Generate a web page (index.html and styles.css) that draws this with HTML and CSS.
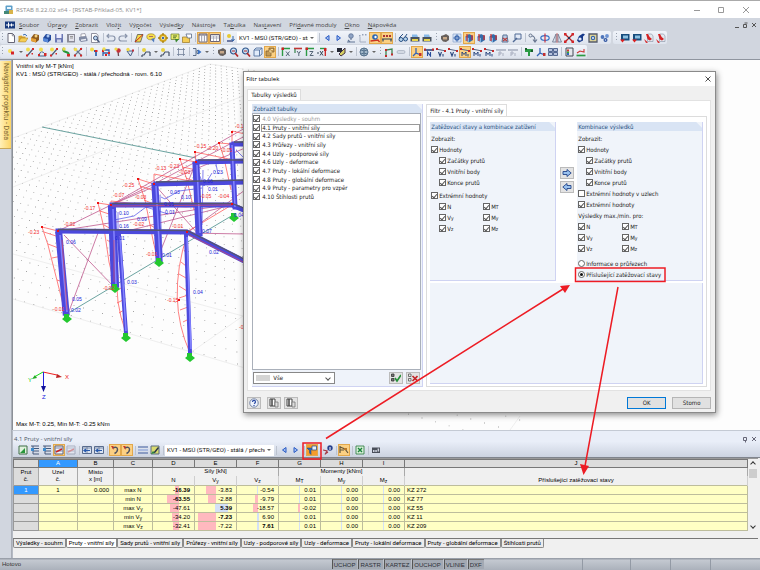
FILE: index.html
```html
<!DOCTYPE html>
<html lang="cs">
<head>
<meta charset="utf-8">
<title>RSTAB 8.22.02 x64</title>
<link rel="stylesheet" href="styles.css">
</head>
<body>
<svg class="defs" aria-hidden="true">
  <symbol id="logo" viewBox="0 0 10 10"><rect x="1.500" y=".5" width="7" height="7" rx="1" fill="#5d9fc9"/><rect x="3" y="2" width="4" height="2" fill="#e9f5fc"/><path d="M0 6h5v3H0z" fill="#487"/><path d="M5 5h4v4H5z" fill="#d9b44a"/></symbol>
  <symbol id="appmark" viewBox="0 0 10 10"><path d="M0 1.500h10v7H0z" fill="#16387c"/><path d="M1 5h8M3.500 2.500v5M6.500 3.500v3" stroke="#fff"/></symbol>
  <symbol id="new" viewBox="0 0 10 10"><path d="M2 .5h4.500L8.500 2.500v7H2z" fill="#fff" stroke="#667"/><path d="M6.300.5v2.300h2.200" fill="none" stroke="#667" stroke-width=".7"/></symbol>
  <symbol id="open" viewBox="0 0 10 10"><path d="M.5 8.500V3l3-.5 1 1h3v5z" fill="#d8a530"/><path d="M.5 8.800 3 5h7L7.500 9z" fill="#f6ce55" stroke="#a67b1c" stroke-width=".5"/><path d="M5 2q2-2 4 1" fill="none" stroke="#3b6fb4"/></symbol>
  <symbol id="boxo" viewBox="0 0 10 10"><path d="M1 5 4 1l5 1v5L6 9.500 1 8z" fill="#8d5a1e"/><path d="m1 5 5 1v3.500L1 8z" fill="#e6a137"/><circle cx="6" cy="3" r="1.500" fill="#f7d27c"/></symbol>
  <symbol id="boxb" viewBox="0 0 10 10"><path d="M1 5 4 1l5 1v5L6 9.500 1 8z" fill="#234a9c"/><path d="m1 5 5 1v3.500L1 8z" fill="#5787d8"/><circle cx="6" cy="3" r="1.500" fill="#a9c6f2"/></symbol>
  <symbol id="save" viewBox="0 0 10 10"><path d="M1 1h8v8.500H1z" fill="#6b78b4"/><path d="M2.500 1h5v4h-5z" fill="#eef"/><path d="M3 6.500h4v3H3z" fill="#ccd3ea"/></symbol>
  <symbol id="saveall" viewBox="0 0 10 10"><path d="M1 1h8v8.500H1z" fill="#8b8c98"/><path d="M3 2h5v6H3z" fill="#e2e3ec"/><path d="M4 3.500h3M4 5h3" stroke="#999"/></symbol>
  <symbol id="print" viewBox="0 0 10 10"><path d="M3 1l4-.5L8 4H3z" fill="#fff" stroke="#778" stroke-width=".6"/><path d="M1 4l7-1 1.500 3v2L3 9 1 7z" fill="#828ca5"/><path d="M3 6.500l5-.7v1.500l-5 .7z" fill="#e9ecf5"/></symbol>
  <symbol id="preview" viewBox="0 0 10 10"><path d="M1.500.5h5l1.500 2v7H1.500z" fill="#fff" stroke="#778" stroke-width=".8"/><circle cx="5.500" cy="5" r="2" fill="#bdd8f3" stroke="#457"/><path d="m7 6.500 2.500 3" stroke="#457" stroke-width="1.300"/></symbol>
  <symbol id="undo" viewBox="0 0 10 10"><path d="M1 3h5.500a2.500 2.500 0 0 1 0 5H1M3 1 1 3l2 2" fill="none" stroke="#8a95ab" stroke-width="1.200"/></symbol>
  <symbol id="redo" viewBox="0 0 10 10"><path d="M9 3H3.500a2.500 2.500 0 0 0 0 5H9M7 1l2 2-2 2" fill="none" stroke="#8a95ab" stroke-width="1.200"/></symbol>
  <symbol id="plane" viewBox="0 0 10 10"><path d="M1 9 3.500 1.500H9L6.500 9z" fill="#f5d94b" stroke="#444" stroke-width=".7"/><path d="M1 9 9 1.500" stroke="#c22" stroke-width="1"/></symbol>
  <symbol id="bubble" viewBox="0 0 10 10"><ellipse cx="5" cy="3.800" rx="4.200" ry="3" fill="#f7de4b" stroke="#977b20" stroke-width=".6"/><path d="M5 6l3 3.500L8.500 5z" fill="#4f79bb"/><path d="M3 3.500h4" stroke="#956" stroke-width=".8"/></symbol>
  <symbol id="gear" viewBox="0 0 10 10"><circle cx="5" cy="5" r="3" fill="#fff3a8" stroke="#d2a41e" stroke-width="2"/><path d="M5 0v2M5 8v2M0 5h2M8 5h2" stroke="#a37d12" stroke-width="1.300"/><circle cx="5" cy="5" r="1.200" fill="#3a66b5"/></symbol>
  <symbol id="note" viewBox="0 0 10 10"><path d="M1 1h8v5.500H1z" fill="#e9ee6c" stroke="#667a2c" stroke-width=".7"/><path d="M3 3h4M3 4.800h3" stroke="#55702c"/><path d="m5 6 1 3.500L9 6z" fill="#39862f"/></symbol>
  <symbol id="folderpen" viewBox="0 0 10 10"><path d="M.5 4h7v5.500h-7z" fill="#f4cd57" stroke="#9b7721" stroke-width=".7"/><path d="M4 1h5.500v4H5.500z" fill="#fff" stroke="#596b89" stroke-width=".8"/></symbol>
  <symbol id="cols" viewBox="0 0 10 10"><path d="M1 1h8v8H1z" fill="#fff" stroke="#6c6474"/><path d="M1 2h8" stroke="#6c6474"/><path d="M3.700 1v8M6.400 1v8" stroke="#99a"/></symbol>
  <symbol id="tablei" viewBox="0 0 10 10"><path d="M.5 1.500h9v7h-9z" fill="#fff" stroke="#6c6474"/><path d="M1 3h8M1 5h8M3.500 3v5M6.500 3v5" stroke="#99a" stroke-width=".7"/></symbol>
  <symbol id="load" viewBox="0 0 10 10"><circle cx="3" cy="3" r="2" fill="#e7c933"/><path d="M1 8h6" stroke="#458" stroke-width="1.500"/><path d="M7 3v5M5.500 6 7 8l1.500-2" fill="none" stroke="#36a"/></symbol>
  <symbol id="lt" viewBox="0 0 10 10"><path d="M7 2.500 3.500 5 7 7.500z" fill="#a9c4f3" stroke="#285ac5" stroke-width="1"/></symbol>
  <symbol id="gt" viewBox="0 0 10 10"><path d="M3 2.500 6.500 5 3 7.500z" fill="#a9c4f3" stroke="#285ac5" stroke-width="1"/></symbol>
  <symbol id="diag" viewBox="0 0 10 10"><circle cx="5" cy="3" r="2.300" fill="#8fa3c4" stroke="#51688e" stroke-width=".7"/><path d="M5 5v2M1 9h8M2 7l2 2" stroke="#637695" stroke-width="1.100"/></symbol>
  <symbol id="xxx" viewBox="0 0 10 10"><path d="M1 2h1.500v1.500H1zM4 1h1.500v1.500H4zM7 1h1.500v1.500H7z" fill="#98a3b7"/><path d="M2 4v5h6" fill="none" stroke="#a5aec0"/></symbol>
  <symbol id="eye" viewBox="0 0 10 10"><path d="M.5 8 8 7l1.500 2" fill="none" stroke="#c32" stroke-width="1.300"/><circle cx="5" cy="4" r="2.800" fill="#2c68b5"/><circle cx="5.500" cy="4" r="1.200" fill="#fff"/></symbol>
  <symbol id="vals" viewBox="0 0 10 10"><path d="M1 2h2v2H1zM4 2h2v2H4zM7 2h2v2H7z" fill="#a33"/><path d="M0 6h10M1 6v2.500M9 6v2.500" stroke="#345" stroke-width="1.200"/></symbol>
  <symbol id="glasses" viewBox="0 0 10 10"><circle cx="3" cy="6.500" r="2" fill="#b6d4ec" stroke="#2b5285"/><circle cx="7.500" cy="6" r="2" fill="#b6d4ec" stroke="#2b5285"/><path d="M1 5 5 1M7 4l2-3" stroke="#2b5285"/></symbol>
  <symbol id="printer" viewBox="0 0 10 10"><path d="M.5 4h9v4.500h-9z" fill="#49525f"/><path d="M2 1.500h5L8 4H2z" fill="#87b9e8"/><path d="M2 6h6v2H2z" fill="#e8d54b"/></symbol>
  <symbol id="hand" viewBox="0 0 10 10"><path d="M1 3 4 2l2-1 3 2v4L6 9 3 8.500 1 6z" fill="#67605c"/><path d="M3 4h4v2.500H3z" fill="#c7a889"/></symbol>
  <symbol id="fine" viewBox="0 0 10 10"><path d="M1 1h8v8H1z" fill="#dbe6f6" stroke="#8ba5cd" stroke-width=".7"/><circle cx="5" cy="5" r="2" fill="none" stroke="#3f6bb0" stroke-width="1.300"/><path d="M5 1v8M1 5h8" stroke="#3f6bb0" stroke-width=".7"/></symbol>
  <symbol id="cube" viewBox="0 0 10 10"><path d="M1 4 5 1l4 2v4L5 9.500 1 7z" fill="#356ba9"/><path d="m1 4 4 1v4.500L1 7z" fill="#83b5e2"/><path d="M3 1v7M8 2v5" stroke="#c33" stroke-width="1.300"/></symbol>
  <symbol id="mesh" viewBox="0 0 10 10"><path d="m2 9 1-7h4l1 7z" fill="#b8cbe5" stroke="#5d7497"/><path d="m3 5 4 3M7 5 3 8" stroke="#b74141" stroke-width="1.200"/></symbol>
  <symbol id="search" viewBox="0 0 10 10"><path d="M3 1h6v5H3z" fill="#e3eaf7" stroke="#506a95"/><path d="M1 9l4-4" stroke="#506a95" stroke-width="1.500"/></symbol>
  <symbol id="curve" viewBox="0 0 10 10"><circle cx="2.500" cy="2.500" r="1.500" fill="none" stroke="#66758e"/><path d="M4 3q3 0 3 5M5 6.500 7 9l2-2.500" fill="none" stroke="#66758e" stroke-width="1.100"/></symbol>
  <symbol id="rot" viewBox="0 0 10 10"><ellipse cx="5" cy="5" rx="4.200" ry="2.400" fill="none" stroke="#3671c6" stroke-width="1.200"/><path d="M5 .5v9" stroke="#c34" stroke-width="1.200"/></symbol>
  <symbol id="mirror" viewBox="0 0 10 10"><path d="M4 1v8H.5zM6 1v8h3.500z" fill="#dde3ee" stroke="#69758b" stroke-width=".8"/><path d="M5 0v10" stroke="#b33" stroke-width=".7"/></symbol>
  <symbol id="cross" viewBox="0 0 10 10"><path d="M1 1 9 9M9 1 1 9" stroke="#b32023" stroke-width="1.300"/><path d="M0 0h2.500v2.500H0zM7.500 0H10v2.500H7.500zM0 7.500h2.500V10H0zM7.500 7.500H10V10H7.500z" fill="#d3262a"/><path d="M4 4h2v2H4z" fill="#235"/></symbol>
  <symbol id="ring" viewBox="0 0 10 10"><path d="M3 3 7 .5l2 1-2 2v4l-4 2-2-2z" fill="#173a8a"/><circle cx="4" cy="6" r="1.600" fill="#e4ebfb"/></symbol>
  <symbol id="camera" viewBox="0 0 10 10"><path d="M1 1h8v8H1z" fill="#dfd497" stroke="#555b6c" stroke-width="1.300"/><circle cx="5" cy="5" r="2.200" fill="#3466aa"/><circle cx="5" cy="5" r=".9" fill="#fff"/></symbol>
  <symbol id="balls" viewBox="0 0 10 10"><circle cx="2.500" cy="4" r="1.900" fill="#4d74ba"/><circle cx="7" cy="3" r="1.900" fill="#6c92d2"/><circle cx="5.500" cy="7" r="2" fill="#3559a1"/><circle cx="5.500" cy="7" r=".7" fill="#dce8fb"/></symbol>
  <symbol id="scr" viewBox="0 0 10 10"><path d="M1 1h8.500v6.500H1z" fill="#174c7d"/><path d="M3 2.500h5v3H3z" fill="#8dc1e2"/><path d="m0 6.500 2.500 3L5 6.500z" fill="#d22"/></symbol>
  <symbol id="pdf" viewBox="0 0 10 10"><path d="M3.500 1h4l1.500 2v5.500H3.500z" fill="#e3e8ef" stroke="#8791a3" stroke-width=".6"/><path d="M2 1h2q1 3 4 5l-2 1.500q-2-1-2.500-1.500zM0 6l4 3.500-2 .5z" fill="#d32224"/></symbol>
  <symbol id="node" viewBox="0 0 10 10"><circle cx="4" cy="4" r="2" fill="#f7e15d"/><path d="M5 4.500h3V7.500H5z" fill="#d52426"/></symbol>
  <symbol id="member" viewBox="0 0 10 10"><path d="M2 9 8 2" stroke="#4c5c76" stroke-width="1.200"/><path d="M1 7.500h2V9.500H1zM7 1h2v2H7zM6.500 6h1.500v1.500H6.500z" fill="#d22b2b"/><circle cx="3" cy="2.500" r="2" fill="#f0dc4e"/></symbol>
  <symbol id="arc" viewBox="0 0 10 10"><path d="M2 8q2-6 6-1M1 9h8" fill="none" stroke="#47618a"/><path d="M7 6h2.500v3H7zM1 7h2v2H1z" fill="#d22b2b"/><circle cx="4" cy="2.500" r="2" fill="#f0dc4e"/></symbol>
  <symbol id="greenm" viewBox="0 0 10 10"><path d="M3 1q-2 3 2 4t2 4" fill="none" stroke="#24963a" stroke-width="2.200"/><path d="M6 7h3v2.500H6z" fill="#d22b2b"/><circle cx="3" cy="2" r="1.700" fill="#e7d849"/></symbol>
  <symbol id="xmem" viewBox="0 0 10 10"><path d="m1 1 8 8M9 1 1 9" stroke="#66748a" stroke-width="1.100"/><path d="M1 7.500h2V9.500H1zM7 1h2v2H7zM7 7.500h2V9.500H7z" fill="#cc2a2a"/><circle cx="2.500" cy="2.500" r="1.800" fill="#f0dc4e"/></symbol>
  <symbol id="support" viewBox="0 0 10 10"><circle cx="3" cy="2.500" r="2" fill="#f0dc4e"/><path d="M5 4h2v5" fill="none" stroke="#3567ae" stroke-width="1.800"/><path d="M6 3h2.500v2H6z" fill="#d22"/></symbol>
  <symbol id="sets" viewBox="0 0 10 10"><path d="M2 9V3h6v6M2 6h6" fill="none" stroke="#3961a8" stroke-width="1.300"/><path d="M1 3h2v2H1zM7 5h2v2H7zM4 7h2v2H4z" fill="#d22"/><circle cx="3" cy="2" r="1.700" fill="#f0dc4e"/></symbol>
  <symbol id="pin" viewBox="0 0 10 10"><path d="m5 4 .5 5" stroke="#6b4650" stroke-width="1.300"/><circle cx="5.500" cy="3.500" r="2.200" fill="#c4313a"/><circle cx="3" cy="2" r="1.600" fill="#f1d949"/></symbol>
  <symbol id="pin2" viewBox="0 0 10 10"><path d="M2 4h6L5.500 9z" fill="#e3e9f4" stroke="#445b83"/><path d="M7 2.500h2v2H7z" fill="#c4313a"/><circle cx="3" cy="2.500" r="1.700" fill="#f1d949"/></symbol>
  <symbol id="dash" viewBox="0 0 10 10"><circle cx="3" cy="3" r="2" fill="#e7d144"/><path d="M1 8h2l2-3h4M9 5v4M1 8v2" fill="none" stroke="#435066" stroke-width="1.200"/></symbol>
  <symbol id="dims" viewBox="0 0 10 10"><path d="M2.500 1v8M7.500 1v8M1 2.500h8M1 7.500h8" stroke="#75839b" stroke-width=".8"/></symbol>
  <symbol id="flow" viewBox="0 0 10 10"><path d="M1 1.500h3v7H1M5 3.500h2v3H5z" fill="#dfe7f5" stroke="#4e627f" stroke-width=".9"/><path d="M6 2.500 9.500 5 6 7.500z" fill="#3972c6"/></symbol>
  <symbol id="zoom" viewBox="0 0 10 10"><circle cx="4.500" cy="4" r="3" fill="#cae1f6" stroke="#31588d" stroke-width="1.200"/><path d="m6 6 3 3.500" stroke="#b22828" stroke-width="1.700"/><path d="M3 4h3" stroke="#b22828"/></symbol>
  <symbol id="wire" viewBox="0 0 10 10"><path d="M1 3h5.500v6H1zM1 3l2-2h6L6.500 3M9 1v6L6.500 9" fill="#e1ecfa" stroke="#52729f" stroke-width=".9"/></symbol>
  <symbol id="solid" viewBox="0 0 10 10"><path d="M1 4h3V1h5v4H6v4H1z" fill="#c39a55" stroke="#80602f" stroke-width=".8"/><path d="M4 4h2v2M6 2.500h2" fill="none" stroke="#f5dda2"/></symbol>
  <symbol id="viewx" viewBox="0 0 10 10"><path d="M1.500 9V1.500H9" fill="none" stroke="#2d9a45" stroke-width="1.400"/><path d="M.5.5h2.500V3H.500z" fill="#c22"/><path d="m5 4.500 3.500 4.500m0-4.500L5 9" stroke="#567" stroke-width="1"/></symbol>
  <symbol id="viewy" viewBox="0 0 10 10"><path d="M1 1.500h8" stroke="#c13535" stroke-width="1.600"/><path d="M2 2v4" stroke="#3f8955" stroke-width="1.300"/><path d="m4 4 1.800 2.500L7.500 4M5.800 6.500V9" fill="none" stroke="#567"/></symbol>
  <symbol id="viewz" viewBox="0 0 10 10"><path d="M1.500 9V1.500H9" fill="none" stroke="#2d9a45" stroke-width="1.400"/><path d="M.5.5h2.500V3H.500z" fill="#c22"/><path d="M4.500 4.500H8L5 8.500h3.500" fill="none" stroke="#567"/></symbol>
  <symbol id="viewnx" viewBox="0 0 10 10"><path d="M3 1.500h6" stroke="#2d9a45" stroke-width="1.400"/><path d="M7 1h2.500v3H7z" fill="#c22"/><path d="M8.300 3v6" stroke="#c22" stroke-width="1.300"/><path d="M0 6h2M3 4l3 4.500M6 4 3 8.500" stroke="#345"/></symbol>
  <symbol id="paint" viewBox="0 0 10 10"><path d="M1 1h5v4H1z" fill="#252936"/><path d="M3 7 9 1v5L5 9z" fill="#d5cf62" stroke="#434"/></symbol>
  <symbol id="globe" viewBox="0 0 10 10"><circle cx="5" cy="5" r="4" fill="#a2b8ca" stroke="#54718c"/><path d="M2 3q3 2 6 0M5 1v8M2 7q3-2 6 0" fill="none" stroke="#54718c"/></symbol>
  <symbol id="frame" viewBox="0 0 10 10"><path d="M2 9V3l6-1v5" fill="none" stroke="#3d8550" stroke-width="1.300"/><path d="M1 8h2v2H1zM7 6.500h2v2H7zM1 2h2v2H1z" fill="#c22b2b"/></symbol>
  <symbol id="pill" viewBox="0 0 10 10"><rect x="1" y="3.500" width="8" height="3" rx="1.500" fill="#d3d9e3" stroke="#99a2b4" stroke-width=".6"/></symbol>
  <symbol id="axis" viewBox="0 0 10 10"><path d="M4 1v5l5 2M4 6 1 9" fill="none" stroke="#3364b6" stroke-width="1.300"/><path d="M7 6h2.500v3H7z" fill="#c32f2f"/></symbol>
  <symbol id="force" viewBox="0 0 10 10"><path d="M0 3h10" stroke="#263d75" stroke-width="1.500"/><path d="M0 1.500h2v2H0zM8 1.500h2v2H8z" fill="#c22b2b"/><path d="M3.500 9V5L6.500 9V5" fill="none" stroke="#264b9c" stroke-width="1.100"/></symbol>
  <symbol id="moment" viewBox="0 0 10 10"><path d="m0 2 10 2" stroke="#596783"/><path d="M0 1h2v2H0zM8 3h2v2H8z" fill="#c22b2b"/><path d="m2.500 5 1.500 4 1.500-4M7 7v2.500" fill="none" stroke="#28467e" stroke-width="1.100"/></symbol>
  <symbol id="moment2" viewBox="0 0 10 10"><path d="m0 2 10 2" stroke="#596783"/><path d="M0 1h2v2H0zM8 3h2v2H8z" fill="#c22b2b"/><path d="M2 9V5l2 2.500L6 5v4M8 7v2.500" fill="none" stroke="#28467e"/></symbol>
  <symbol id="faded" viewBox="0 0 10 10"><path d="M0 3h10" stroke="#9ba3b4" stroke-width="1.300"/><path d="M3 9V5h2v2H3M7 6v3" fill="none" stroke="#a9afc0"/></symbol>
  <symbol id="plant" viewBox="0 0 10 10"><path d="M1 2h8v3H6v4H4V5H1z" fill="#2b9a44"/><path d="M1 1h2v2H1zM7 3h2v2H7z" fill="#175c2b"/></symbol>
  <symbol id="grid4" viewBox="0 0 10 10"><path d="M.5 1.500h4v3h-4zM5.500 1.500h4v3h-4zM.5 5.500h4v3h-4zM5.500 5.500h4v3h-4z" fill="#b7c3de" stroke="#364c7c" stroke-width=".8"/></symbol>
  <symbol id="panel" viewBox="0 0 10 10"><path d="M2 1h7v8H2z" fill="#e4e7ec" stroke="#454b56"/><path d="M3 2.500h2v2H3z" fill="#d33"/><path d="M3 4.500h2v1.500H3z" fill="#3a3"/><path d="M3 6h2v2H3z" fill="#36b"/></symbol>
  <symbol id="result" viewBox="0 0 10 10"><path d="M.5 8.500h9" stroke="#2b9a44" stroke-width="1.700"/><path d="M1 6 4 4l4 1V2" fill="none" stroke="#c33" stroke-width="1.100"/></symbol>
  <symbol id="sheetg" viewBox="0 0 10 10"><path d="M1 1h8v8H1z" fill="#dff0dc" stroke="#406e48"/><path d="m2 8 5-5v5z" fill="#27963b"/></symbol>
  <symbol id="sheetb" viewBox="0 0 10 10"><path d="M1 1h8M3 1v8h6M3 3.500h6M3 6h6" fill="none" stroke="#46597a"/><path d="M1 3h3v3H1z" fill="#3d8bcc"/></symbol>
  <symbol id="sheetr" viewBox="0 0 10 10"><path d="M1 1h8v8H1z" fill="#f4f5fa" stroke="#5c6480"/><path d="M1 3h8M1 6h8" stroke="#7b88a8"/><path d="m2 7 6-3" stroke="#c22" stroke-width="1.500"/></symbol>
  <symbol id="colarrow" viewBox="0 0 10 10"><path d="M.5 1.500h9v7h-9z" fill="#d9e3f2" stroke="#596c8e"/><path d="M.5 3h9M5 2v6" stroke="#596c8e" stroke-width=".7"/><path d="M2 5.500h6M4 4 2 5.500 4 7" fill="none" stroke="#2659ad" stroke-width="1.200"/></symbol>
  <symbol id="hook" viewBox="0 0 10 10"><path d="M2.500 3q5-2 5 1.500 0 2.500-3 4" fill="none" stroke="#4f5260" stroke-width="1.400"/><path d="M1 1h2.500v4z" fill="#c93528"/></symbol>
  <symbol id="stripes" viewBox="0 0 10 10"><path d="M0 2h10M0 8h10" stroke="#7186b7" stroke-width="1.500"/><path d="M0 5h10" stroke="#aabbe0" stroke-width="2"/></symbol>
  <symbol id="edit" viewBox="0 0 10 10"><path d="M1 1h8v8H1z" fill="#d9da70" stroke="#5a6c81"/><path d="m3 8 5-6 1 1-4 5z" fill="#27324a"/><path d="m1 9 2-3 2 2z" fill="#268442"/></symbol>
  <symbol id="filter" viewBox="0 0 10 10"><path d="M0 3h6L4 5.500v4L2.500 8V5.500z" fill="#2b69bc" stroke="#1b4177" stroke-width=".5"/><path d="M5 1h4.500v4H5z" fill="#e5effc" stroke="#33588b" stroke-width=".8"/></symbol>
  <symbol id="info" viewBox="0 0 10 10"><circle cx="7" cy="3" r="2.700" fill="#27408d"/><path d="M7 2v3" stroke="#fff"/><path d="m0 5 4 1-2 3.500M5 7l-3 2" fill="none" stroke="#a33b45" stroke-width="1.200"/></symbol>
  <symbol id="branch" viewBox="0 0 10 10"><path d="M1 1v7M1 2l5 2 3 4M1 5h4" fill="none" stroke="#62563c" stroke-width="1.200"/><path d="M5 3h3v2H5z" fill="#b97828"/></symbol>
  <symbol id="excel" viewBox="0 0 10 10"><path d="M1 1h8v8H1z" fill="#d9efd9" stroke="#267a3a" stroke-width=".8"/><path d="m3 3 4 4m0-4L3 7" stroke="#18833a" stroke-width="1.400"/></symbol>
  <symbol id="calc" viewBox="0 0 10 10"><path d="M1 2.500h8v5.500H1z" fill="#4a4f5a"/><path d="M2 5h1.500v2H2zM4.300 5h1.500v2H4.300zM6.600 3.500h1.500v3H6.600z" fill="#cfd4df"/></symbol>
  <symbol id="q" viewBox="0 0 10 10"><circle cx="5" cy="5" r="4.200" fill="#eef3fd" stroke="#5c6f94" stroke-width=".8"/><path d="M3.500 4q0-1.600 1.500-1.600T6.500 4Q6.500 5 5 5.600M5 7v1" fill="none" stroke="#2949a3" stroke-width="1.200"/></symbol>
  <symbol id="copy" viewBox="0 0 10 10"><path d="M1 1h5v7H1z" fill="#fff" stroke="#444"/><path d="M3 1v7" stroke="#444" stroke-width="1.500"/><path d="M6 4h3v5H6z" fill="#ddd" stroke="#777" stroke-width=".8"/></symbol>
  <symbol id="bigright" viewBox="0 0 10 10"><path d="M1 3.500h4V1.500L9.200 5 5 8.500v-2H1z" fill="#9ac2ef" stroke="#22458a" stroke-width=".9"/></symbol>
  <symbol id="bigleft" viewBox="0 0 10 10"><path d="M9 3.500H5V1.500L.8 5 5 8.500v-2h4z" fill="#9ac2ef" stroke="#22458a" stroke-width=".9"/></symbol>
  <symbol id="allon" viewBox="0 0 10 10"><path d="M.5 1h2.500v2.500H.500zM.5 5.500h2.500V8H.500z" fill="#777" stroke="#333" stroke-width=".8"/><path d="m4 5 2 3 4-6" fill="none" stroke="#249038" stroke-width="1.600"/></symbol>
  <symbol id="alloff" viewBox="0 0 10 10"><path d="M.5 1h2.500v2.500H.500zM.5 5.500h2.500V8H.500z" fill="#eee" stroke="#555" stroke-width=".8"/><path d="m4.500 3 5 5m0-5-5 5" stroke="#c2262a" stroke-width="1.600"/></symbol>
</svg>

<div class="app">
  <header class="titlebar">
    <svg class="ico"><use href="#logo"/></svg>
    <span class="caption">RSTAB 8.22.02 x64 - [RSTAB-Příklad-05, KV1*]</span>
    <svg class="winctl" viewBox="0 0 60 10"><path d="M2 5.500h6M26.500 2.500h5v5h-5zM51 2l6 6m0-6-6 6" fill="none" stroke="#999"/></svg>
  </header>

  <nav class="menubar">
    <svg class="ico"><use href="#appmark"/></svg>
    <a href="#"><u>S</u>oubor</a><a href="#">Úpr<u>a</u>vy</a><a href="#"><u>Z</u>obrazit</a><a href="#">Vlož<u>i</u>t</a><a href="#">Vý<u>p</u>očet</a><a href="#">Výsled<u>k</u>y</a><a href="#">Nástroje</a><a href="#">Ta<u>b</u>ulka</a><a href="#">Nas<u>t</u>avení</a><a href="#">Pří<u>d</u>avné moduly</a><a href="#"><u>O</u>kno</a><a href="#"><u>N</u>ápověda</a>
    <svg class="docctl" viewBox="0 0 24 8"><path d="M1 6.500h4M9.500 3.500h3v3h-3zM10.500 2h3M18 2l4 4m0-4-4 4" fill="none" stroke="#555"/></svg>
  </nav>

  <div class="toolrow">
    <div class="strip">
      <i class="grip first"></i>
      <button><svg><use href="#new"/></svg></button><button><svg><use href="#open"/></svg></button><button><svg><use href="#boxo"/></svg></button><button><svg><use href="#boxb"/></svg></button><button><svg><use href="#save"/></svg></button><button><svg><use href="#saveall"/></svg></button><button><svg><use href="#print"/></svg></button><button><svg><use href="#preview"/></svg></button>
      <i class="sep"></i>
      <button><svg><use href="#undo"/></svg></button><button><svg><use href="#redo"/></svg></button>
      <i class="sep"></i>
      <button><svg><use href="#plane"/></svg></button><button><svg><use href="#bubble"/></svg></button><button><svg><use href="#gear"/></svg></button><button><svg><use href="#note"/></svg></button><button><svg><use href="#folderpen"/></svg></button>
      <i class="sep"></i>
      <button class="on"><svg><use href="#cols"/></svg></button><button class="on"><svg><use href="#tablei"/></svg></button>
      <i class="sep"></i>
      <button><svg><use href="#load"/></svg></button>
      <div class="combo top"><select aria-label="Zatěžovací stav"><option>KV1 - MSÚ (STR/GEO) - stálá / přechodná</option></select></div>
      <i class="sep"></i>
      <button><svg><use href="#lt"/></svg></button><button><svg><use href="#gt"/></svg></button><button><svg><use href="#diag"/></svg></button><button><svg><use href="#xxx"/></svg></button><button class="on"><svg><use href="#eye"/></svg></button><button class="on"><svg><use href="#vals"/></svg></button>
      <i class="sep"></i>
      <button><svg><use href="#glasses"/></svg></button><button><svg><use href="#printer"/></svg></button><button><svg><use href="#printer"/></svg></button>
      <i class="grip"></i>
      <button><svg><use href="#hand"/></svg></button><button><svg><use href="#fine"/></svg></button><button class="on"><svg><use href="#cube"/></svg></button><button><svg><use href="#cube"/></svg></button><button><svg><use href="#cube"/></svg></button><button><svg><use href="#mesh"/></svg></button><button><svg><use href="#search"/></svg></button>
      <i class="sep"></i>
      <button><svg><use href="#curve"/></svg></button><button><svg><use href="#rot"/></svg></button><button><svg><use href="#mirror"/></svg></button><button><svg><use href="#cross"/></svg></button><button><svg><use href="#ring"/></svg></button><button><svg><use href="#camera"/></svg></button><button><svg><use href="#balls"/></svg></button>
    </div>
    <div class="strip">
      <i class="grip"></i>
      <button><svg><use href="#scr"/></svg></button><button><svg><use href="#scr"/></svg></button><button><svg><use href="#pdf"/></svg></button><button><svg><use href="#pdf"/></svg></button>
    </div>
  </div>

  <div class="toolrow">
    <div class="strip">
      <i class="grip first"></i>
      <button><svg><use href="#node"/></svg></button><i class="dd"></i>
      <button><svg><use href="#member"/></svg></button><button><svg><use href="#arc"/></svg></button><button><svg><use href="#member"/></svg></button><button><svg><use href="#greenm"/></svg></button><button><svg><use href="#xmem"/></svg></button>
      <i class="sep"></i>
      <button><svg><use href="#support"/></svg></button><button><svg><use href="#sets"/></svg></button><button><svg><use href="#pin"/></svg></button><button><svg><use href="#pin2"/></svg></button>
      <i class="sep"></i>
      <button><svg><use href="#dash"/></svg></button><i class="dd"></i><button><svg><use href="#dash"/></svg></button>
      <i class="sep"></i>
      <button><svg><use href="#dims"/></svg></button>
      <i class="sep"></i>
      <button><svg><use href="#flow"/></svg></button><i class="dd"></i>
      <i class="grip"></i>
      <button><svg><use href="#hand"/></svg></button><button><svg><use href="#zoom"/></svg></button><button><svg><use href="#zoom"/></svg></button><button><svg><use href="#wire"/></svg></button><button class="on"><svg><use href="#solid"/></svg></button>
      <i class="sep"></i>
      <button><svg><use href="#viewx"/></svg></button><button><svg><use href="#viewy"/></svg></button><button><svg><use href="#viewz"/></svg></button><button><svg><use href="#viewnx"/></svg></button><i class="dd"></i>
      <button><svg><use href="#paint"/></svg></button><i class="dd"></i>
      <i class="sep"></i>
      <button><svg><use href="#globe"/></svg></button><i class="dd"></i>
      <i class="grip"></i>
      <button><svg><use href="#frame"/></svg></button><button><svg><use href="#pill"/></svg></button>
      <i class="sep"></i>
      <button class="on"><svg><use href="#axis"/></svg></button><button><svg><use href="#force"/></svg></button><button><svg><use href="#moment"/></svg></button><button><svg><use href="#moment"/></svg></button><button class="on"><svg><use href="#moment2"/></svg></button><button><svg><use href="#moment2"/></svg></button><button><svg><use href="#moment2"/></svg></button><button><svg><use href="#faded"/></svg></button><button><svg><use href="#faded"/></svg></button>
      <i class="sep"></i>
      <button><svg><use href="#plant"/></svg></button><button><svg><use href="#axis"/></svg></button><button><svg><use href="#grid4"/></svg></button>
      <i class="sep"></i>
      <button><svg><use href="#panel"/></svg></button><button><svg><use href="#result"/></svg></button>
    </div>
  </div>

  <div class="work">
    <aside class="side"><button class="sidetab">Navigátor projektu - Data</button></aside>
    <div class="content">
      <main class="view">
        <svg class="scene" viewBox="13 60 747 371" preserveAspectRatio="xMinYMin slice">
          <path id="ground" fill="#8d8d8d"/>
          <path d="M13 138 210 64 243 69M13 187 150 132 243 96M13 299 245 368M190 353 243 316M13 254 243 316M510 430l10-14" fill="none" stroke="#e4e4e4" stroke-width=".6"/>
          <path d="M42 127 196 158M70 312 233 215" fill="none" stroke="#6ba3a0"/>
          <g fill="none" stroke="#b8437f" stroke-width=".7">
            <path d="M64 235 115 288M98 233 68 314M58 231 232 204M111 205 245 148M111 205 245 128M58 231 111 205 154 184 245 136M119 233 232 205M187 233 245 234M187 233 245 190M154 184 199 235M196 162 159 255"/>
          </g>
          <g fill="none" stroke="#ff4b4b" stroke-width=".7">
            <path d="M58 231 42 227 48 245 65 312M44 232l15 5M48 244l13 5M52 258l10-2M57 280l6 2M111 205 98 203 104 228 109 262 115 286M100 211l12 4M104 225l9 5M107 240l6 4M109 255l6 4M154 184 138 179 145 200 153 240 158 262M140 186l15 5M144 200l12 5M150 225l7 4M196 162 180 159 187 180 194 210M182 167l15 3M186 178l11 4M232 144 219 143 224 158 231 190M232 144 232 131 245 134M196 162 195 152 243 162M154 184 154 174 205 184M111 205V201L155 206M187 235Q166 300 190 353M184 250l2 3M181 262l5 4M179 274l7 4M179 286l8 5M179 298l9-3M180 310l8-3M183 322l6-3M118 275Q114 300 126 333M116 291l5-3M117 303l6-3M119 313l5-3M185 233 230 206M113 203 186 207 232 204"/>
          </g>
          <g fill="none" stroke="#4b4bea" stroke-width=".7">
            <path d="M60 235l3 30M114 220l20-4 12-9 22 7M161 197l4 2 14-8 23-3M198 172l6 14 8-13M236 150l8 8M118 212v50M160 195l2 60M203 170l-1 55M216 164l2 10M120 234l4 50"/>
          </g>
          <g fill="none" stroke="#4c49dc" stroke-linecap="square">
            <path d="M232 145 235 207" stroke-width="5"/><path d="M196 165 199 233" stroke-width="7"/><path d="M155 186 159 259" stroke-width="7"/><path d="M112 209 115 284" stroke-width="8"/><path d="M59 235 66 312" stroke-width="7"/>
            <path d="M119 235 126 333M186 236 190 352" stroke-width="4"/>
            <path d="M234 144H246M198 162 246 161M156 184 246 182M112 205H232L246 211" stroke-width="5"/><path d="M58 231 187 232 246 262" stroke-width="5"/>
          </g>
          <g fill="none" stroke="#8484ff"><path d="M232 145 235 207M197 165 200 233M156 186 160 259M113 209 116 284M60 235 67 312M120 236l6 95M187 237l4 112" stroke-width="1.500"/></g>
          <g fill="none" stroke="#55566f" stroke-width="1.300"><path d="M58 229.500 187 230.500 246 260M112 203.500H232L246 209M156 182 246 180M198 160H246M234 142H246"/></g>
          <path d="M62 240l5 70M114 240v42M189 235l56 28M112 206l120-1" stroke="#e0495e" stroke-width=".7"/>
          <g fill="#23c82f"><path id="sup" d="M62 319l5-4 5 4-5 4zM64 314h5v4h-5z"/><use href="#sup" x="59" y="19"/><use href="#sup" x="123" y="39"/><use href="#sup" x="48" y="-30"/><use href="#sup" x="92" y="-56"/><use href="#sup" x="167" y="-101"/></g>
          <g fill="#e11"><path d="M57 230h2v2h-2zM110 204h2v2h-2zM153 183h2v2h-2zM195 161h2v2h-2zM231 203h2v2h-2zM186 231h2v2h-2zM41 226h2v2h-2zM97 202h2v2h-2zM137 178h2v2h-2zM179 158h2v2h-2zM218 142h2v2h-2zM194 151h2v2h-2zM231 131h2v2h-2zM178 299h2v2h-2z"/></g>
          <g class="lab red">
            <text x="28" y="234">-0.23</text><text x="64" y="226">-0.02</text><text x="84" y="210">-0.17</text><text x="113" y="197">-0.07</text><text x="123" y="187">-0.25</text><text x="135" y="199">-0.03</text><text x="155" y="170">-0.13</text><text x="168" y="168">-0.23</text><text x="179" y="174">-0.03</text><text x="195" y="148">-0.15</text><text x="207" y="150">-0.20</text><text x="221" y="152">-0.05</text><text x="235" y="128">-0.16</text><text x="200" y="198">-0.05</text><text x="218" y="198">-0.04</text><text x="133" y="226">-0.02</text><text x="172" y="228">-0.01</text><text x="53" y="311">-0.01</text><text x="103" y="290">-0.02</text><text x="146" y="256">-0.01</text><text x="167" y="302">-0.15</text><text x="239" y="329">-0.05</text>
          </g>
          <g class="lab blue">
            <text x="119" y="215">0.10</text><text x="137" y="221">0.09</text><text x="119" y="228">0.16</text><text x="115" y="240">0.01</text><text x="66" y="244">0.06</text><text x="72" y="301">0.05</text><text x="71" y="312">0.02</text><text x="127" y="284">0.03</text><text x="193" y="294">0.04</text><text x="162" y="257">0.01</text><text x="165" y="214">0.01</text><text x="164" y="206">0.05</text><text x="202" y="233">0.07</text><text x="234" y="217">0.04</text><text x="208" y="191">0.01</text><text x="203" y="183">0.06</text><text x="181" y="199">0.10</text><text x="170" y="194">0.03</text><text x="213" y="174">0.23</text><text x="209" y="254">0.02</text>
          </g>
          <path d="M43 372 57 375" stroke="#e22"/><path d="m62 377-6 1 1-4z" fill="#b22"/><path d="M43 372 36 376" stroke="#1d1"/><path d="m32 379 3-4 2 3z" fill="#2a2"/><path d="M43.500 372v15" stroke="#22d"/><path d="M41 386h5l-2.500 6z" fill="#119"/>
          <g class="lab axes"><text x="65" y="379" fill="#e22">X</text><text x="28" y="382" fill="#1c1">Y</text><text x="42" y="399" fill="#22d">Z</text></g>
        </svg>
        <p class="viewnote">Vnitřní síly M-T [kNm]<br>KV1 : MSÚ (STR/GEO) - stálá / přechodná - rovn. 6.10</p>
        <p class="viewfoot">Max M-T: 0.25, Min M-T: -0.25 kNm</p>
      </main>

      <section class="tablepanel">
        <div class="paneltop">
          <div class="panelhead"><h2>4.1 Pruty - vnitřní síly</h2><svg viewBox="0 0 16 8"><path d="M1.500 2.500h3v3h-3zM3.500 5.500v2M10 2l4 4m0-4-4 4" fill="none" stroke="#667"/></svg></div>
          <div class="paneltools">
            <button><svg><use href="#sheetg"/></svg></button><button><svg><use href="#sheetb"/></svg></button><button><svg><use href="#sheetb"/></svg></button><button class="on"><svg><use href="#sheetr"/></svg></button><button class="dim"><svg><use href="#sheetr"/></svg></button>
            <i class="sep"></i>
            <button><svg><use href="#colarrow"/></svg></button><button><svg><use href="#colarrow"/></svg></button>
            <i class="sep"></i>
            <button class="on"><svg><use href="#hook"/></svg></button><button class="on"><svg><use href="#hook"/></svg></button>
            <i class="sep"></i>
            <button><svg><use href="#stripes"/></svg></button><button><svg><use href="#edit"/></svg></button>
            <i class="sep"></i>
            <div class="combo low"><select aria-label="Zatěžovací stav tabulky"><option>KV1 - MSÚ (STR/GEO) - stálá / přechodná</option></select></div>
            <i class="sep"></i>
            <button><svg><use href="#lt"/></svg></button><button><svg><use href="#gt"/></svg></button>
            <i class="sep"></i>
            <button class="on strong"><svg><use href="#filter"/></svg></button>
            <i class="sep"></i>
            <button><svg><use href="#info"/></svg></button>
            <i class="sep"></i>
            <button class="on"><svg><use href="#branch"/></svg></button>
            <i class="sep"></i>
            <button><svg><use href="#excel"/></svg></button>
            <i class="sep"></i>
            <button><svg><use href="#calc"/></svg></button>
          </div>
        </div>
        <div class="sheet">
          <table>
            <colgroup><col class="c0"><col class="ca"><col class="cb"><col class="cc"><col class="cn"><col class="cn"><col class="cn"><col class="cn"><col class="cn"><col class="cn"><col></colgroup>
            <thead>
              <tr class="letters"><th></th><th class="sel">A</th><th>B</th><th>C</th><th>D</th><th>E</th><th>F</th><th>G</th><th>H</th><th>I</th><th>J</th></tr>
              <tr><th rowspan="2" class="corner">Prut<br>č.</th><th rowspan="2">Uzel<br>č.</th><th rowspan="2">Místo<br>x [m]</th><th rowspan="2"></th><th colspan="3" class="grp">Síly [kN]</th><th colspan="3" class="grp">Momenty [kNm]</th><th class="grp"></th></tr>
              <tr><th>N</th><th>V<sub>y</sub></th><th>V<sub>z</sub></th><th>M<sub>T</sub></th><th>M<sub>y</sub></th><th>M<sub>z</sub></th><th class="jh">Příslušející zatěžovací stavy</th></tr>
            </thead>
            <tbody>
              <tr><th class="sel">1</th><td class="mid">1</td><td>0.000</td><td class="mid">max N</td><td class="neg n" style="--w:4px"><b>-16.39</b></td><td class="neg" style="--w:10px">-3.83</td><td class="pos" style="--w:1px">-0.54</td><td class="pos" style="--w:1px">0.01</td><td class="pos" style="--w:1px">0.00</td><td class="pos" style="--w:1px">0.00</td><td class="kz">KZ 272</td></tr>
              <tr><th></th><td></td><td></td><td class="mid">min N</td><td class="neg n" style="--w:12px"><b>-63.55</b></td><td class="neg" style="--w:8px">-2.88</td><td class="neg" style="--w:3px">-9.79</td><td class="pos" style="--w:1px">0.01</td><td class="pos" style="--w:1px">0.00</td><td class="pos" style="--w:1px">0.00</td><td class="kz">KZ 77</td></tr>
              <tr><th></th><td></td><td></td><td class="mid">max V<sub>y</sub></td><td class="neg n" style="--w:9px">-47.61</td><td class="pos" style="--w:13px"><b>5.39</b></td><td class="neg" style="--w:5px">-18.57</td><td class="neg" style="--w:2px">-0.02</td><td class="pos" style="--w:1px">0.00</td><td class="pos" style="--w:1px">0.00</td><td class="kz">KZ 55</td></tr>
              <tr><th></th><td></td><td></td><td class="mid">min V<sub>y</sub></td><td class="neg n" style="--w:7px">-34.20</td><td class="neg" style="--w:18px"><b>-7.23</b></td><td class="pos" style="--w:2px">6.90</td><td class="pos" style="--w:1px">0.01</td><td class="pos" style="--w:1px">0.00</td><td class="pos" style="--w:1px">0.00</td><td class="kz">KZ 11</td></tr>
              <tr><th></th><td></td><td></td><td class="mid">max V<sub>z</sub></td><td class="neg n" style="--w:6px">-32.41</td><td class="neg" style="--w:18px">-7.22</td><td class="pos" style="--w:2px"><b>7.61</b></td><td class="pos" style="--w:1px">0.01</td><td class="pos" style="--w:1px">0.00</td><td class="pos" style="--w:1px">0.00</td><td class="kz">KZ 209</td></tr>
            </tbody>
          </table>
          <div class="scroll"><span class="up"></span><i></i><span class="down"></span></div>
        </div>
        <div class="tabs"><button>Výsledky - souhrn</button><button class="cur">Pruty - vnitřní síly</button><button>Sady prutů - vnitřní síly</button><button>Průřezy - vnitřní síly</button><button>Uzly - podporové síly</button><button>Uzly - deformace</button><button>Pruty - lokální deformace</button><button>Pruty - globální deformace</button><button>Štíhlosti prutů</button></div>
      </section>
    </div>
  </div>

  <footer class="status">
    <span class="ready">Hotovo</span>
    <span class="flag">UCHOP</span><span class="flag">RASTR</span><span class="flag">KARTEZ</span><span class="flag">OUCHOP</span><span class="flag">VLINIE</span><span class="flag">DXF</span>
    <span class="cells"><i></i><i></i><i></i><i></i></span>
  </footer>

  <div class="dialog" role="dialog" aria-label="Filtr tabulek">
    <div class="dtitle"><span>Filtr tabulek</span><svg viewBox="0 0 8 8"><path d="m1.500 1.500 5 5m0-5-5 5" stroke="#222" stroke-width=".8"/></svg></div>
    <div class="dbody">
      <button class="dtab">Tabulky výsledků</button>
      <div class="page">
        <div class="leftcol">
          <h3>Zobrazit tabulky</h3>
          <div class="list">
            <label class="off"><input type="checkbox" checked><span>4.0 Výsledky - souhrn</span></label>
            <label class="focus"><input type="checkbox" checked><span>4.1 Pruty - vnitřní síly</span></label>
            <label><input type="checkbox" checked><span>4.2 Sady prutů - vnitřní síly</span></label>
            <label><input type="checkbox" checked><span>4.3 Průřezy - vnitřní síly</span></label>
            <label><input type="checkbox" checked><span>4.4 Uzly - podporové síly</span></label>
            <label><input type="checkbox" checked><span>4.6 Uzly - deformace</span></label>
            <label><input type="checkbox" checked><span>4.7 Pruty - lokální deformace</span></label>
            <label><input type="checkbox" checked><span>4.8 Pruty - globální deformace</span></label>
            <label><input type="checkbox" checked><span>4.9 Pruty - parametry pro vzpěr</span></label>
            <label><input type="checkbox" checked><span>4.10 Štíhlosti prutů</span></label>
          </div>
          <div class="pick">
            <div class="colorsel"><i></i><select aria-label="Skupina tabulek"><option>Vše</option></select></div>
            <button class="sq"><svg><use href="#allon"/></svg></button><button class="sq"><svg><use href="#alloff"/></svg></button>
          </div>
        </div>
        <div class="rightcol">
          <button class="dtab inner">Filtr - 4.1 Pruty - vnitřní síly</button>
          <div class="subpage">
            <div class="groups">
              <fieldset class="group">
                <h3>Zatěžovací stavy a kombinace zatížení</h3>
                <p>Zobrazit:</p>
                <label><input type="checkbox" checked>Hodnoty</label>
                <label class="in"><input type="checkbox" checked>Začátky prutů</label>
                <label class="in"><input type="checkbox" checked>Vnitřní body</label>
                <label class="in"><input type="checkbox" checked>Konce prutů</label>
                <label class="gap2"><input type="checkbox" checked>Extrémní hodnoty</label>
                <div class="two in"><label><input type="checkbox" checked>N</label><label><input type="checkbox" checked>M<sub>T</sub></label><label><input type="checkbox" checked>V<sub>y</sub></label><label><input type="checkbox" checked>M<sub>y</sub></label><label><input type="checkbox" checked>V<sub>z</sub></label><label><input type="checkbox" checked>M<sub>z</sub></label></div>
              </fieldset>
              <div class="movers"><button class="sq"><svg><use href="#bigright"/></svg></button><button class="sq"><svg><use href="#bigleft"/></svg></button></div>
              <fieldset class="group">
                <h3>Kombinace výsledků</h3>
                <p>Zobrazit:</p>
                <label><input type="checkbox" checked>Hodnoty</label>
                <label class="in"><input type="checkbox" checked>Začátky prutů</label>
                <label class="in"><input type="checkbox" checked>Vnitřní body</label>
                <label class="in"><input type="checkbox" checked>Konce prutů</label>
                <label><input type="checkbox">Extrémní hodnoty v uzlech</label>
                <label><input type="checkbox" checked>Extrémní hodnoty</label>
                <p>Výsledky max./min. pro:</p>
                <div class="two"><label><input type="checkbox" checked>N</label><label><input type="checkbox" checked>M<sub>T</sub></label><label><input type="checkbox" checked>V<sub>y</sub></label><label><input type="checkbox" checked>M<sub>y</sub></label><label><input type="checkbox" checked>V<sub>z</sub></label><label><input type="checkbox" checked>M<sub>z</sub></label></div>
                <label class="gap4"><input type="radio" name="info">Informace o průřezech</label>
                <label><input type="radio" name="info" checked>Příslušející zatěžovací stavy</label>
              </fieldset>
            </div>
            <div class="group blank"></div>
          </div>
        </div>
      </div>
      <div class="dfoot">
        <button class="sq"><svg><use href="#q"/></svg></button><button class="sq apart"><svg><use href="#copy"/></svg></button><button class="sq"><svg><use href="#copy"/></svg></button>
        <button class="act ok">OK</button><button class="act">Storno</button>
      </div>
    </div>
  </div>

  <svg class="marks" viewBox="0 0 760 570" aria-hidden="true">
    <g fill="none" stroke="#ed1c24" stroke-width="1.500"><rect x="303" y="443" width="18" height="16"/><rect x="575.500" y="268" width="89.500" height="13.500"/><path d="M326 438.500 563 289M618 287 585 466"/></g>
    <path d="M570 285l-5 8-5-7zM583.500 475l-3.500-11 9 2z" fill="#ed1c24"/>
  </svg>
</div>
<script src="scene.js"></script>
</body>
</html>
```
FILE: scene.js
```js
// Projects the square ground raster onto the four corners of the work plane.
(function () {
  var p = [[-227, 228], [210, 64], [700, 137], [505, 442]];
  var dx1 = p[1][0] - p[2][0], dx2 = p[3][0] - p[2][0];
  var dy1 = p[1][1] - p[2][1], dy2 = p[3][1] - p[2][1];
  var sx = p[0][0] - p[1][0] + p[2][0] - p[3][0];
  var sy = p[0][1] - p[1][1] + p[2][1] - p[3][1];
  var det = dx1 * dy2 - dx2 * dy1;
  var g = (sx * dy2 - dx2 * sy) / det, h = (dx1 * sy - sx * dy1) / det;
  var a = p[1][0] - p[0][0] + g * p[1][0], b = p[3][0] - p[0][0] + h * p[3][0];
  var d = p[1][1] - p[0][1] + g * p[1][1], e = p[3][1] - p[0][1] + h * p[3][1];
  var out = '', n = 50, m = 74;
  for (var i = 0; i <= n; i++) {
    for (var j = 0; j <= m; j++) {
      var u = i / n, v = j / m, w = g * u + h * v + 1;
      var x = (a * u + b * v + p[0][0]) / w, y = (d * u + e * v + p[0][1]) / w;
      if (x > 13) out += 'M' + x.toFixed(1) + ' ' + y.toFixed(1) + 'h.8v.8h-.8z';
    }
  }
  document.getElementById('ground').setAttribute('d', out);
})();
```
FILE: styles.css
```css
* { box-sizing: border-box; }
html, body { margin: 0; height: 100%; }
body { font: 6px/8px "Liberation Sans", Arial, sans-serif; color: #222; background: #d1d6df; }
button, select, input { font: inherit; color: inherit; margin: 0; padding: 0; border: 0; background: none; }
h2, h3, p { margin: 0; font: inherit; }
a { color: inherit; text-decoration: none; }
sub { font-size: 5px; line-height: 1px; vertical-align: -1px; }
svg { display: block; }
.defs { position: absolute; width: 0; height: 0; }
.app { position: relative; display: flex; flex-direction: column; min-height: 100vh; overflow: hidden; }
.ico { width: 10px; height: 10px; }

.titlebar { display: flex; align-items: center; gap: 2px; height: 18px; padding: 0 8px 0 4px; background: #fff; border-top: 1px solid #aaa; color: #8a8a8a; font-family: "Open Sans", sans-serif; }
.winctl { width: 60px; height: 10px; margin-left: auto; }
.menubar { display: flex; align-items: center; height: 13px; padding-left: 5px; font-family: "Open Sans", sans-serif; color: #444; }
.menubar .ico { margin-right: 4px; }
.menubar a { margin-right: 8px; }
.docctl { width: 24px; height: 8px; margin-left: auto; margin-right: 2px; }

.toolrow { display: flex; gap: 2px; height: 14px; }
.toolrow + .toolrow { border-bottom: 1px solid #8f959f; height: 15px; }
.strip { display: flex; align-items: center; height: 13px; border-radius: 2px; background: linear-gradient(#f1f4fa, #dde3ed); }
.strip button, .paneltools button { width: 12px; height: 12px; padding: 1px; flex: none; }
.strip svg, .paneltools svg, .sq svg { width: 10px; height: 10px; }
.strip button.on, .paneltools button.on { background: #fbd083; border: 1px solid #e2a84c; padding: 0; }
.paneltools button.strong { background: #f59c2c; }
.paneltools button.dim { opacity: .4; }
.sep { width: 4px; height: 9px; flex: none; background: linear-gradient(#bcc3cf, #bcc3cf) center / 1px 100% no-repeat; }
.grip { width: 6px; height: 9px; flex: none; background: repeating-linear-gradient(#98a0ae 0 1px, transparent 1px 3px) center / 1px 100% no-repeat; }
.grip.first { width: 5px; }
.dd { width: 7px; height: 12px; flex: none; display: grid; place-items: center; }
.dd::after, .combo::after { content: ""; border: solid transparent; border-width: 2px 2px 0; border-top-color: #666; }
.combo { display: flex; align-items: center; height: 11px; padding: 0 3px 0 2px; background: #fff; flex: none; font-family: Roboto, sans-serif; }
.combo.top { width: 80px; }
.combo.low { width: 109px; }
.combo select { flex: 1; min-width: 0; appearance: none; overflow: hidden; margin-right: 2px; color: #111; }

.work { flex: 1; display: flex; }
.side { width: 12px; padding-top: 1px; border-right: 1px solid #a8adb6; }
.sidetab { width: 11px; height: 88px; writing-mode: vertical-rl; text-align: left; padding: 2px 0; color: #7a6531; background: linear-gradient(90deg, #fff0b8, #fdd565); border-bottom: 1px solid #c7a75a; font-size: 7px; font-family: Roboto, sans-serif; }
.content { flex: 1; min-width: 0; display: flex; flex-direction: column; }
.view { position: relative; flex: 1; background: #fdfdfd; border-left: 1px solid #8c9097; overflow: hidden; }
.scene { position: absolute; inset: 0; width: 100%; height: 100%; }
.viewnote, .viewfoot { position: absolute; left: 3px; color: #000; }
.viewnote { top: 2px; }
.viewfoot { bottom: 2px; }
.lab { font-size: 5px; }
.red { fill: #f12a2a; }
.blue { fill: #2020d8; }
.axes { font-size: 6px; }

.tablepanel { background: #f0f0f0; border-left: 1px solid #b5bac4; border-top: 1px solid #c4cad4; }
.paneltop { background: linear-gradient(#e9eef8 40%, #ccd3e0); border-bottom: 1px solid #80858d; }
.panelhead { display: flex; justify-content: space-between; align-items: center; height: 13px; padding: 3px 2px 0 1px; color: #4b5563; }
.panelhead h2 { font-family: "Open Sans", sans-serif; }
.panelhead svg { width: 16px; height: 8px; }
.paneltools { display: flex; align-items: center; height: 13px; padding-left: 4px; }
.sheet { display: flex; align-items: flex-start; border-top: 1px solid #999; padding-bottom: 7px; border-bottom: 1px solid #777; margin-right: 2px; }
table { flex: 1; min-width: 0; table-layout: fixed; border-collapse: collapse; width: 100%; line-height: 7px; color: #000; }
.c0 { width: 25px; } .ca { width: 39px; } .cb { width: 36px; } .cc { width: 39px; } .cn { width: 42px; }
th { padding: 0; font-weight: normal; background: #f0f0f0; border: 1px solid #a9a9a9; height: 9px; border-top: 0; border-bottom: 0; }
.letters th { height: 8px; background: #dcdcdc; border: 1px solid #777; line-height: 6px; }
.letters th.sel, tbody th.sel { background: #3399ff; color: #fff; }
.corner, tbody th, .letters th:first-child { background: #dcdcdc; }
tbody th { border: 1px solid #999; height: 9px; }
thead tr:nth-child(3) th { border: 0; border-right: 1px solid #cfcfcf; }
.jh { line-height: 9px; }
td { padding: 0 4px 0 0; height: 9px; text-align: right; background: #ffffc4 no-repeat; border: 1px solid #bdbd9c; white-space: nowrap; line-height: 7px; }
td.mid { text-align: center; padding: 0; }
td.kz { text-align: left; padding-left: 2px; }
td.neg { background-image: linear-gradient(#ffb9bf, #ffb9bf); background-size: var(--w) 100%; background-position: right 20px top; }
td.neg.n { background-position: right 15px top; }
td.pos { background-image: linear-gradient(#d3e0f7, #d3e0f7); background-size: var(--w) 100%; background-position: left 20px top; }
.scroll { width: 10px; align-self: stretch; display: flex; flex-direction: column; align-items: center; background: #f0f0f0; padding-top: 3px; }
.scroll i { width: 8px; height: 9px; margin-top: 3px; background: #cdcdcd; }
.scroll .up, .scroll .down { width: 4px; height: 4px; border: 1px solid #333; border-right: 0; border-bottom: 0; transform: rotate(45deg); }
.scroll .down { margin-top: auto; margin-bottom: 3px; transform: rotate(225deg); }
.tabs { display: flex; padding-bottom: 10px; font-family: Roboto, sans-serif; }
.tabs button { height: 9px; padding: 0 2px; border: 1px solid #8a8a8a; border-top: 0; border-radius: 0 0 2px 2px; background: #ececec; white-space: nowrap; line-height: 8px; color: #000; }
.tabs .cur { background: #fff; }

.status { display: flex; align-items: center; height: 12px; padding-left: 2px; background: linear-gradient(#8f959f, #c3c8d0 20%, #abb1bb); color: #333; }
.ready { width: 43.5%; }
.flag { border-left: 1px solid #555; border-top: 1px solid #777; padding: 1px 2px 0 1px; height: 10px; margin-right: 1px; color: #2d3138; background: #a3a9b3; }
.cells { display: flex; margin-left: auto; height: 100%; }
.cells i { width: 40px; border-left: 1px solid #939aa5; }
.cells i:first-child { width: 48px; }
.cells i:last-child { width: 50px; }

.dialog { position: absolute; left: 32%; top: 71px; width: 473px; height: 342px; display: flex; flex-direction: column; background: #f0f0f0; border: 1px solid #8a8a8a; box-shadow: 1px 2px 6px rgba(0,0,0,.45); font-family: "DejaVu Sans Condensed", "Liberation Sans", sans-serif; color: #222; }
.dtitle { display: flex; align-items: center; justify-content: space-between; height: 14px; padding: 0 3px 0 2px; background: #fff; font-family: "Open Sans", sans-serif; color: #000; }
.dtitle svg { width: 8px; height: 8px; }
.dbody { flex: 1; display: flex; flex-direction: column; padding: 3px 4px 2px 3px; }
.dtab { align-self: flex-start; height: 11px; padding: 0 3px; background: #fff; border: 1px solid #ddd; border-bottom: 0; }
.page { flex: 1; display: flex; gap: 3px; padding: 3px; padding-left: 4px; background: #fff; border: 1px solid #e2e2e2; }
.leftcol { width: 171px; display: flex; flex-direction: column; background: #eff3fa; border-right: 1px solid #cfd3f2; border-bottom: 1px solid #cfd3f2; }
h3 { height: 9px; padding-left: 1px; line-height: 9px; color: #1f4f80; background: #d9e4f4; clip-path: polygon(0 0, calc(100% - 6px) 0, 100% 6px, 100% 100%, 0 100%); white-space: nowrap; }
.list { flex: 1; background: #fff; border: 1px solid #aab0ba; margin-right: 1px; }
.list label { display: flex; align-items: center; height: 9px; }
.list label:nth-child(3n) { height: 8px; }
.list span { flex: 1; line-height: 8px; border: 1px solid transparent; border-width: 0 1px; }
.list .focus span { outline: 1px solid #999; outline-offset: -1px; }
.off { color: #999; }
input { appearance: none; flex: none; width: 7px; height: 7px; border: 1px solid #666; background: #fff; display: grid; place-items: center; margin-right: 1px; }
input[type=checkbox]:checked::after { content: ""; width: 2px; height: 4px; border: solid #555; border-width: 0 1px 1px 0; transform: rotate(40deg); }
input[type=radio] { border-radius: 50%; }
input[type=radio]:checked::after { content: ""; width: 3px; height: 3px; border-radius: 50%; background: #111; }
.pick { display: flex; align-items: center; gap: 3px; height: 16px; padding: 0 2px 0 1px; }
.colorsel { display: flex; align-items: center; position: relative; width: 82px; height: 12px; margin-right: auto; background: #fff; border: 1px solid #888; }
.colorsel i { width: 14px; height: 6px; margin: 0 3px 0 2px; background: #d4d4d4; }
.colorsel select { flex: 1; appearance: none; }
.colorsel::after { content: ""; width: 3px; height: 3px; margin-right: 4px; border: solid #555; border-width: 0 1px 1px 0; transform: rotate(45deg); }
.sq { width: 14px; height: 12px; display: grid; place-items: center; background: #e3e3e3; border: 1px solid #bbb; }
.rightcol { flex: 1; min-width: 0; display: flex; flex-direction: column; }
.dtab.inner { height: 12px; }
.subpage { flex: 1; display: flex; flex-direction: column; gap: 2px; padding: 5px 3px 2px; border: 1px solid #dcdcdc; }
.groups { display: flex; justify-content: space-between; }
.group { width: 126px; min-width: 0; margin: 0; padding: 0; border: solid #cfd3f2; border-width: 0 1px 1px 0; background: #f0f4fa; }
.group p { height: 11px; line-height: 11px; padding-left: 1px; }
.group h3 + p { margin-top: 2px; }
.group label { display: flex; align-items: center; height: 11px; padding-left: 1px; white-space: nowrap; }
.group label.in { padding-left: 9px; }
.group .two.in { padding-left: 8px; }
.group sub { align-self: center; padding-top: 2px; }
.two { display: grid; grid-template-columns: 44px 1fr; }
.gap2 { margin-top: 2px; }
.gap4 { margin-top: 4px; }
.movers { display: flex; flex-direction: column; gap: 2px; padding-top: 45px; }
.blank { flex: 1; width: 100%; }
.dfoot { display: flex; align-items: center; gap: 3px; padding-top: 6px; margin-bottom: 1px; }
.apart { margin-left: 3px; }
.act { width: 39px; height: 12px; background: #e1e1e1; border: 1px solid #b5b5b5; }
.act.ok { margin-left: auto; margin-right: 3px; border-color: #0078d7; }
.marks { position: absolute; inset: 0; width: 100%; height: 100%; pointer-events: none; }
```
